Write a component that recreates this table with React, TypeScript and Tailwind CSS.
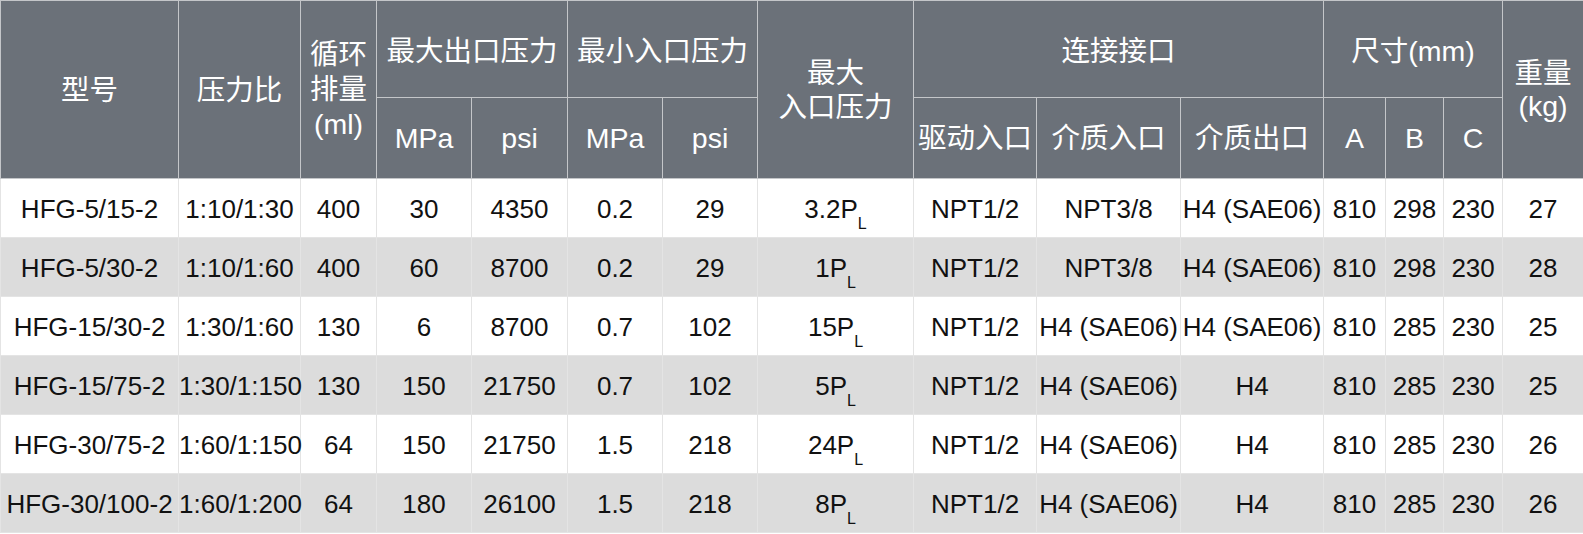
import React from "react";

const rows = [
  ["HFG-5/15-2", "1:10/1:30", "400", "30", "4350", "0.2", "29", "3.2", "NPT1/2", "NPT3/8", "H4 (SAE06)", "810", "298", "230", "27"],
  ["HFG-5/30-2", "1:10/1:60", "400", "60", "8700", "0.2", "29", "1", "NPT1/2", "NPT3/8", "H4 (SAE06)", "810", "298", "230", "28"],
  ["HFG-15/30-2", "1:30/1:60", "130", "6", "8700", "0.7", "102", "15", "NPT1/2", "H4 (SAE06)", "H4 (SAE06)", "810", "285", "230", "25"],
  ["HFG-15/75-2", "1:30/1:150", "130", "150", "21750", "0.7", "102", "5", "NPT1/2", "H4 (SAE06)", "H4", "810", "285", "230", "25"],
  ["HFG-30/75-2", "1:60/1:150", "64", "150", "21750", "1.5", "218", "24", "NPT1/2", "H4 (SAE06)", "H4", "810", "285", "230", "26"],
  ["HFG-30/100-2", "1:60/1:200", "64", "180", "26100", "1.5", "218", "8", "NPT1/2", "H4 (SAE06)", "H4", "810", "285", "230", "26"],
];

const widths = [178, 122, 76, 95, 96, 95, 95, 156, 123, 144, 143, 62, 58, 59, 81];

const th = "border border-[#c4c6c9] text-white font-normal text-center align-middle p-0 leading-[34px]";
const td = "border border-[#e4e4e4] text-center align-middle p-0 pt-[3px] whitespace-nowrap";

export default function App() {
  return (
    <div
      className="w-[1583px] h-[534px] bg-white overflow-hidden"
      style={{ fontFamily: '"Liberation Sans", "Noto Sans CJK SC", sans-serif' }}
    >
      <table className="table-fixed border-collapse w-[1583px] border border-[#8e9399]">
        <colgroup>
          {widths.map((w, i) => (
            <col key={i} style={{ width: w }} />
          ))}
        </colgroup>
        <thead className="bg-[#6b7179] text-[28.5px]">
          <tr className="h-[97px]">
            <th rowSpan={2} className={th}>型号</th>
            <th rowSpan={2} className={th}>压力比</th>
            <th rowSpan={2} className={th}>
              <div className="leading-[35px]">循环<br />排量<br />(ml)</div>
            </th>
            <th colSpan={2} className={th + " pt-[3px]"}>最大出口压力</th>
            <th colSpan={2} className={th + " pt-[3px]"}>最小入口压力</th>
            <th rowSpan={2} className={th}>
              <div className="leading-[34px]">最大<br />入口压力</div>
            </th>
            <th colSpan={3} className={th + " pt-[3px]"}>连接接口</th>
            <th colSpan={3} className={th + " pt-[3px]"}>尺寸(mm)</th>
            <th rowSpan={2} className={th}>
              <div className="leading-[33px]">重量<br />(kg)</div>
            </th>
          </tr>
          <tr className="h-[81px]">
            <th className={th}>MPa</th>
            <th className={th}>psi</th>
            <th className={th}>MPa</th>
            <th className={th}>psi</th>
            <th className={th}>驱动入口</th>
            <th className={th}>介质入口</th>
            <th className={th}>介质出口</th>
            <th className={th}>A</th>
            <th className={th}>B</th>
            <th className={th}>C</th>
          </tr>
        </thead>
        <tbody className="text-[26px] text-[#111111]">
          {rows.map((r, i) => (
            <tr key={i} className={i % 2 === 0 ? "h-[59px] bg-white" : "h-[59px] bg-[#dcdcdc]"}>
              {r.map((c, j) => (
                <td key={j} className={td}>
                  {j === 7 ? (
                    <span>
                      {c}P<sub className="text-[16px] align-[-7px]">L</sub>
                    </span>
                  ) : (
                    c
                  )}
                </td>
              ))}
            </tr>
          ))}
        </tbody>
      </table>
    </div>
  );
}
